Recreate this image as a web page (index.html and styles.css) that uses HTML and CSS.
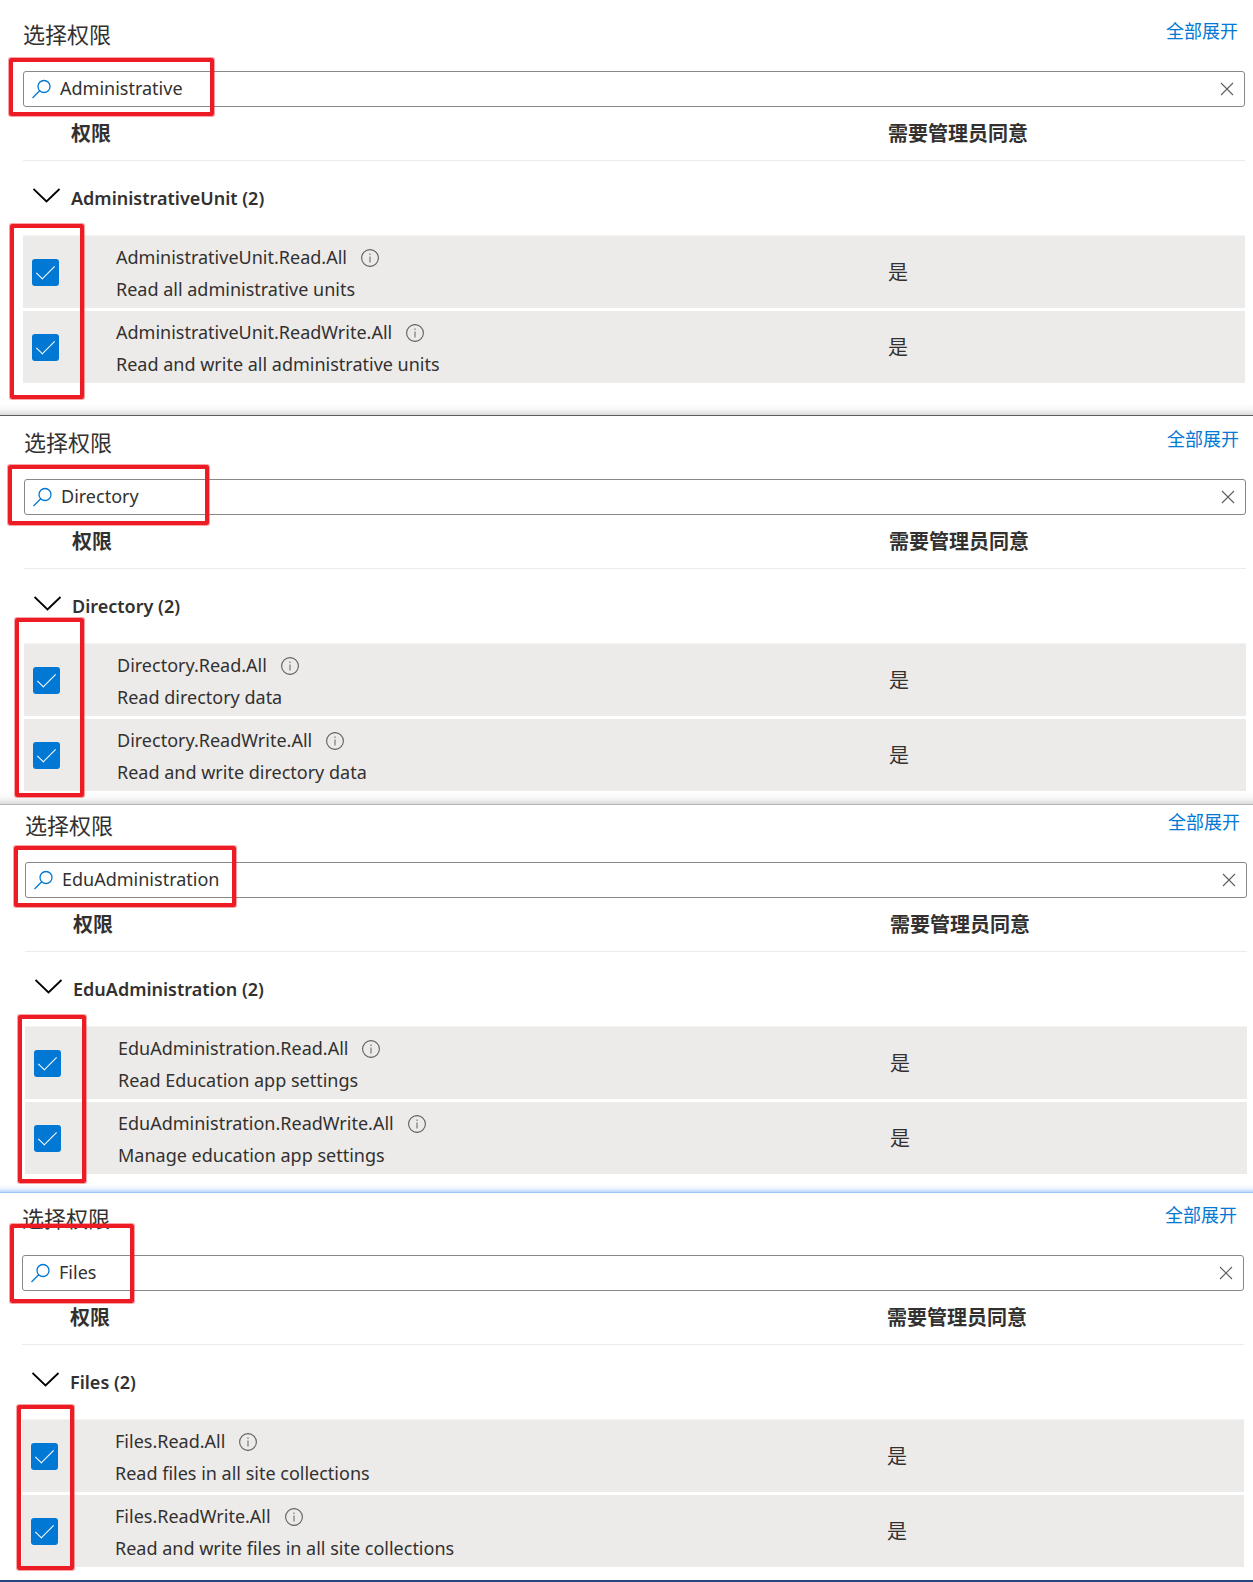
FILE: index.html
```html
<!DOCTYPE html>
<html lang="zh-CN">
<head>
    <meta charset="UTF-8">
    <meta name="viewport" content="width=device-width, initial-scale=1.0">
    <title>选择权限</title>
    <link rel="stylesheet" href="styles.css">
</head>

<body>
<!-- Shared icons -->
<svg class="icon-defs" aria-hidden="true">
    <symbol id="icon-search" viewBox="0 0 20 20">
        <circle cx="12" cy="7.5" r="6" fill="none" stroke="currentColor" stroke-width="1.3"/>
        <path d="M7.7 11.8L0.5 19" fill="none" stroke="currentColor" stroke-width="1.3"/>
    </symbol>
    <symbol id="icon-clear" viewBox="0 0 14 14">
        <path d="M1 1L13 13M13 1L1 13" fill="none" stroke="currentColor" stroke-width="1.1"/>
    </symbol>
    <symbol id="icon-chevron" viewBox="0 0 28 15">
        <path d="M0.5 1L13.5 13.5L26.5 1" fill="none" stroke="currentColor" stroke-width="1.8"/>
    </symbol>
    <symbol id="icon-info" viewBox="0 0 18 18">
        <circle cx="9" cy="9" r="8.4" fill="none" stroke="currentColor" stroke-width="1.1"/>
        <path d="M9 7.5V13.5M9 4.5V6" fill="none" stroke="currentColor" stroke-width="1.3" opacity="0.75"/>
    </symbol>
</svg>

<section class="panel panel-administrative">
    <div class="panel-header">
        <h2>选择权限</h2>
        <a href="#" class="expand-all">全部展开</a>
    </div>
    <div class="search-box">
        <svg class="search-icon"><use href="#icon-search"/></svg>
        <input type="text" value="Administrative" aria-label="搜索权限">
        <button type="button" class="clear-button" aria-label="清除"><svg><use href="#icon-clear"/></svg></button>
    </div>
    <table class="permissions">
        <thead>
            <tr>
                <th class="col-check"></th>
                <th>权限</th>
                <th class="col-consent">需要管理员同意</th>
            </tr>
        </thead>
        <tbody>
            <tr class="group">
                <td><button type="button" class="toggle" aria-label="折叠"><svg><use href="#icon-chevron"/></svg></button></td>
                <th colspan="2">AdministrativeUnit (2)</th>
            </tr>
            <tr class="permission">
                <td><input type="checkbox" id="unitRead" checked></td>
                <td class="name">
                    <label for="unitRead">AdministrativeUnit.Read.All</label><svg class="info"><use href="#icon-info"/></svg>
                    <p>Read all administrative units</p>
                </td>
                <td class="consent">是</td>
            </tr>
            <tr class="permission">
                <td><input type="checkbox" id="unitReadWrite" checked></td>
                <td class="name">
                    <label for="unitReadWrite">AdministrativeUnit.ReadWrite.All</label><svg class="info"><use href="#icon-info"/></svg>
                    <p>Read and write all administrative units</p>
                </td>
                <td class="consent">是</td>
            </tr>
        </tbody>
    </table>
    <div class="mark mark-search"></div>
    <div class="mark mark-checks"></div>
</section>

<section class="panel panel-directory">
    <div class="panel-header">
        <h2>选择权限</h2>
        <a href="#" class="expand-all">全部展开</a>
    </div>
    <div class="search-box">
        <svg class="search-icon"><use href="#icon-search"/></svg>
        <input type="text" value="Directory" aria-label="搜索权限">
        <button type="button" class="clear-button" aria-label="清除"><svg><use href="#icon-clear"/></svg></button>
    </div>
    <table class="permissions">
        <thead>
            <tr>
                <th class="col-check"></th>
                <th>权限</th>
                <th class="col-consent">需要管理员同意</th>
            </tr>
        </thead>
        <tbody>
            <tr class="group">
                <td><button type="button" class="toggle" aria-label="折叠"><svg><use href="#icon-chevron"/></svg></button></td>
                <th colspan="2">Directory (2)</th>
            </tr>
            <tr class="permission">
                <td><input type="checkbox" id="directoryRead" checked></td>
                <td class="name">
                    <label for="directoryRead">Directory.Read.All</label><svg class="info"><use href="#icon-info"/></svg>
                    <p>Read directory data</p>
                </td>
                <td class="consent">是</td>
            </tr>
            <tr class="permission">
                <td><input type="checkbox" id="directoryReadWrite" checked></td>
                <td class="name">
                    <label for="directoryReadWrite">Directory.ReadWrite.All</label><svg class="info"><use href="#icon-info"/></svg>
                    <p>Read and write directory data</p>
                </td>
                <td class="consent">是</td>
            </tr>
        </tbody>
    </table>
    <div class="mark mark-search"></div>
    <div class="mark mark-checks"></div>
</section>

<section class="panel panel-education">
    <div class="panel-header">
        <h2>选择权限</h2>
        <a href="#" class="expand-all">全部展开</a>
    </div>
    <div class="search-box">
        <svg class="search-icon"><use href="#icon-search"/></svg>
        <input type="text" value="EduAdministration" aria-label="搜索权限">
        <button type="button" class="clear-button" aria-label="清除"><svg><use href="#icon-clear"/></svg></button>
    </div>
    <table class="permissions">
        <thead>
            <tr>
                <th class="col-check"></th>
                <th>权限</th>
                <th class="col-consent">需要管理员同意</th>
            </tr>
        </thead>
        <tbody>
            <tr class="group">
                <td><button type="button" class="toggle" aria-label="折叠"><svg><use href="#icon-chevron"/></svg></button></td>
                <th colspan="2">EduAdministration (2)</th>
            </tr>
            <tr class="permission">
                <td><input type="checkbox" id="eduRead" checked></td>
                <td class="name">
                    <label for="eduRead">EduAdministration.Read.All</label><svg class="info"><use href="#icon-info"/></svg>
                    <p>Read Education app settings</p>
                </td>
                <td class="consent">是</td>
            </tr>
            <tr class="permission">
                <td><input type="checkbox" id="eduReadWrite" checked></td>
                <td class="name">
                    <label for="eduReadWrite">EduAdministration.ReadWrite.All</label><svg class="info"><use href="#icon-info"/></svg>
                    <p>Manage education app settings</p>
                </td>
                <td class="consent">是</td>
            </tr>
        </tbody>
    </table>
    <div class="mark mark-search"></div>
    <div class="mark mark-checks"></div>
</section>

<section class="panel panel-files">
    <div class="panel-header">
        <h2>选择权限</h2>
        <a href="#" class="expand-all">全部展开</a>
    </div>
    <div class="search-box">
        <svg class="search-icon"><use href="#icon-search"/></svg>
        <input type="text" value="Files" aria-label="搜索权限">
        <button type="button" class="clear-button" aria-label="清除"><svg><use href="#icon-clear"/></svg></button>
    </div>
    <table class="permissions">
        <thead>
            <tr>
                <th class="col-check"></th>
                <th>权限</th>
                <th class="col-consent">需要管理员同意</th>
            </tr>
        </thead>
        <tbody>
            <tr class="group">
                <td><button type="button" class="toggle" aria-label="折叠"><svg><use href="#icon-chevron"/></svg></button></td>
                <th colspan="2">Files (2)</th>
            </tr>
            <tr class="permission">
                <td><input type="checkbox" id="filesRead" checked></td>
                <td class="name">
                    <label for="filesRead">Files.Read.All</label><svg class="info"><use href="#icon-info"/></svg>
                    <p>Read files in all site collections</p>
                </td>
                <td class="consent">是</td>
            </tr>
            <tr class="permission">
                <td><input type="checkbox" id="filesReadWrite" checked></td>
                <td class="name">
                    <label for="filesReadWrite">Files.ReadWrite.All</label><svg class="info"><use href="#icon-info"/></svg>
                    <p>Read and write files in all site collections</p>
                </td>
                <td class="consent">是</td>
            </tr>
        </tbody>
    </table>
    <div class="mark mark-search"></div>
    <div class="mark mark-checks"></div>
</section>
</body>
</html>
```

FILE: styles.css
```css
* {
    box-sizing: border-box;
}

body {
    font-family: 'Segoe UI', 'Noto Sans', 'Noto Sans CJK SC', sans-serif;
    font-size: 18px;
    line-height: 32px;
    background-color: #fff;
    margin: 0;
    color: #323130;
}

.icon-defs {
    display: none;
}

.panel {
    position: relative;
}

/* Each panel was captured with slightly different margins */
.panel-administrative {
    padding: 19px 8px 32px 23px;
    border-bottom: 1px solid #5c5c5c;
    background: linear-gradient(to top, #dcdcdc, #f8f8f8 6px, #fff 12px);
}

.panel-directory {
    padding: 11px 7px 13px 24px;
    border-bottom: 1px solid #b4b4b4;
    background: linear-gradient(to top, #dcdcdc, #f8f8f8 6px, #fff 12px);
}

.panel-education {
    padding: 5px 6px 18px 25px;
    border-bottom: 1px solid #9cc4f5;
    background: linear-gradient(to top, #bcd8fa, #f2f8fe 4px, #fff 8px);
}

.panel-files {
    padding: 10px 9px 13px 22px;
    border-bottom: 2px solid #24487a;
}

.panel-header {
    display: flex;
    justify-content: space-between;
    align-items: flex-start;
    padding-right: 7px;
    margin-bottom: 22px;
}

h2 {
    margin: 0;
    font-size: 22px;
    font-weight: 400;
    line-height: 30px;
}

.expand-all {
    color: #0078d4;
    font-size: 18px;
    line-height: 24px;
    text-decoration: none;
}

.search-box {
    display: flex;
    align-items: center;
    height: 36px;
    padding: 0 10px 0 8px;
    border: 1px solid #8a8886;
    border-radius: 3px;
    background-color: #fff;
}

.search-icon {
    width: 20px;
    height: 20px;
    color: #0078d4;
}

.search-box input {
    flex: 1;
    min-width: 0;
    padding: 0 8px 2px;
    border: none;
    outline: none;
    background: none;
    color: inherit;
    font: inherit;
}

.clear-button,
.toggle {
    display: flex;
    padding: 0;
    border: none;
    background: none;
    color: #605e5c;
    cursor: pointer;
}

.clear-button svg {
    width: 14px;
    height: 14px;
}

.toggle {
    margin-left: 10px;
    margin-bottom: 5px;
    color: #000;
}

.toggle svg {
    width: 28px;
    height: 15px;
}

.permissions {
    width: 100%;
    table-layout: fixed;
    border-spacing: 0;
}

.permissions th,
.permissions td {
    padding: 0;
    text-align: left;
}

.permissions thead th {
    height: 54px;
    border-bottom: 1px solid #edebe9;
    font-size: 20px;
    font-weight: 700;
}

.col-check {
    width: 48px;
}

.col-consent {
    width: 357px;
}

.group th,
.group td {
    height: 74px;
    font-weight: 600;
}

.permission td {
    height: 75px;
    border-top: 3px solid #fff;
    background-color: #edebe9;
    background-clip: padding-box;
}

.group + .permission td {
    height: 73px;
    border-top: 1px solid #f5f4f3;
}

.permission .name {
    padding: 2px 0 0 45px;
}

.permission .consent {
    padding-top: 2px;
    font-size: 20px;
}

.permission p {
    margin: 0;
}

.info {
    width: 18px;
    height: 18px;
    margin-left: 14px;
    vertical-align: -3px;
    color: #605e5c;
}

input[type="checkbox"] {
    display: block;
    position: relative;
    appearance: none;
    width: 27px;
    height: 27px;
    margin: 0 0 0 9px;
    border-radius: 3px;
    background-color: #fff;
}

input[type="checkbox"]:checked {
    background-color: #0078d4;
}

input[type="checkbox"]:checked::after {
    content: "";
    position: absolute;
    left: 9px;
    top: 2px;
    width: 8px;
    height: 17px;
    border: solid #fff;
    border-width: 0 1px 1px 0;
    transform: rotate(45deg);
}

/* Red highlight frames drawn over the panels */
.mark {
    position: absolute;
    border: 4px solid #ed1c24;
    border-radius: 2px;
    box-shadow: 0 0 0 1px rgba(237, 28, 36, 0.4);
    pointer-events: none;
}

.panel-administrative .mark-search {
    left: 9px;
    top: 58px;
    width: 205px;
    height: 58px;
}

.panel-administrative .mark-checks {
    left: 10px;
    top: 224px;
    width: 74px;
    height: 175px;
}

.panel-directory .mark-search {
    left: 8px;
    top: 49px;
    width: 201px;
    height: 60px;
}

.panel-directory .mark-checks {
    left: 15px;
    top: 202px;
    width: 69px;
    height: 179px;
}

.panel-education .mark-search {
    left: 14px;
    top: 41px;
    width: 222px;
    height: 61px;
}

.panel-education .mark-checks {
    left: 18px;
    top: 210px;
    width: 68px;
    height: 168px;
}

.panel-files .mark-search {
    left: 10px;
    top: 31px;
    width: 124px;
    height: 79px;
}

.panel-files .mark-checks {
    left: 17px;
    top: 212px;
    width: 57px;
    height: 165px;
}
```
